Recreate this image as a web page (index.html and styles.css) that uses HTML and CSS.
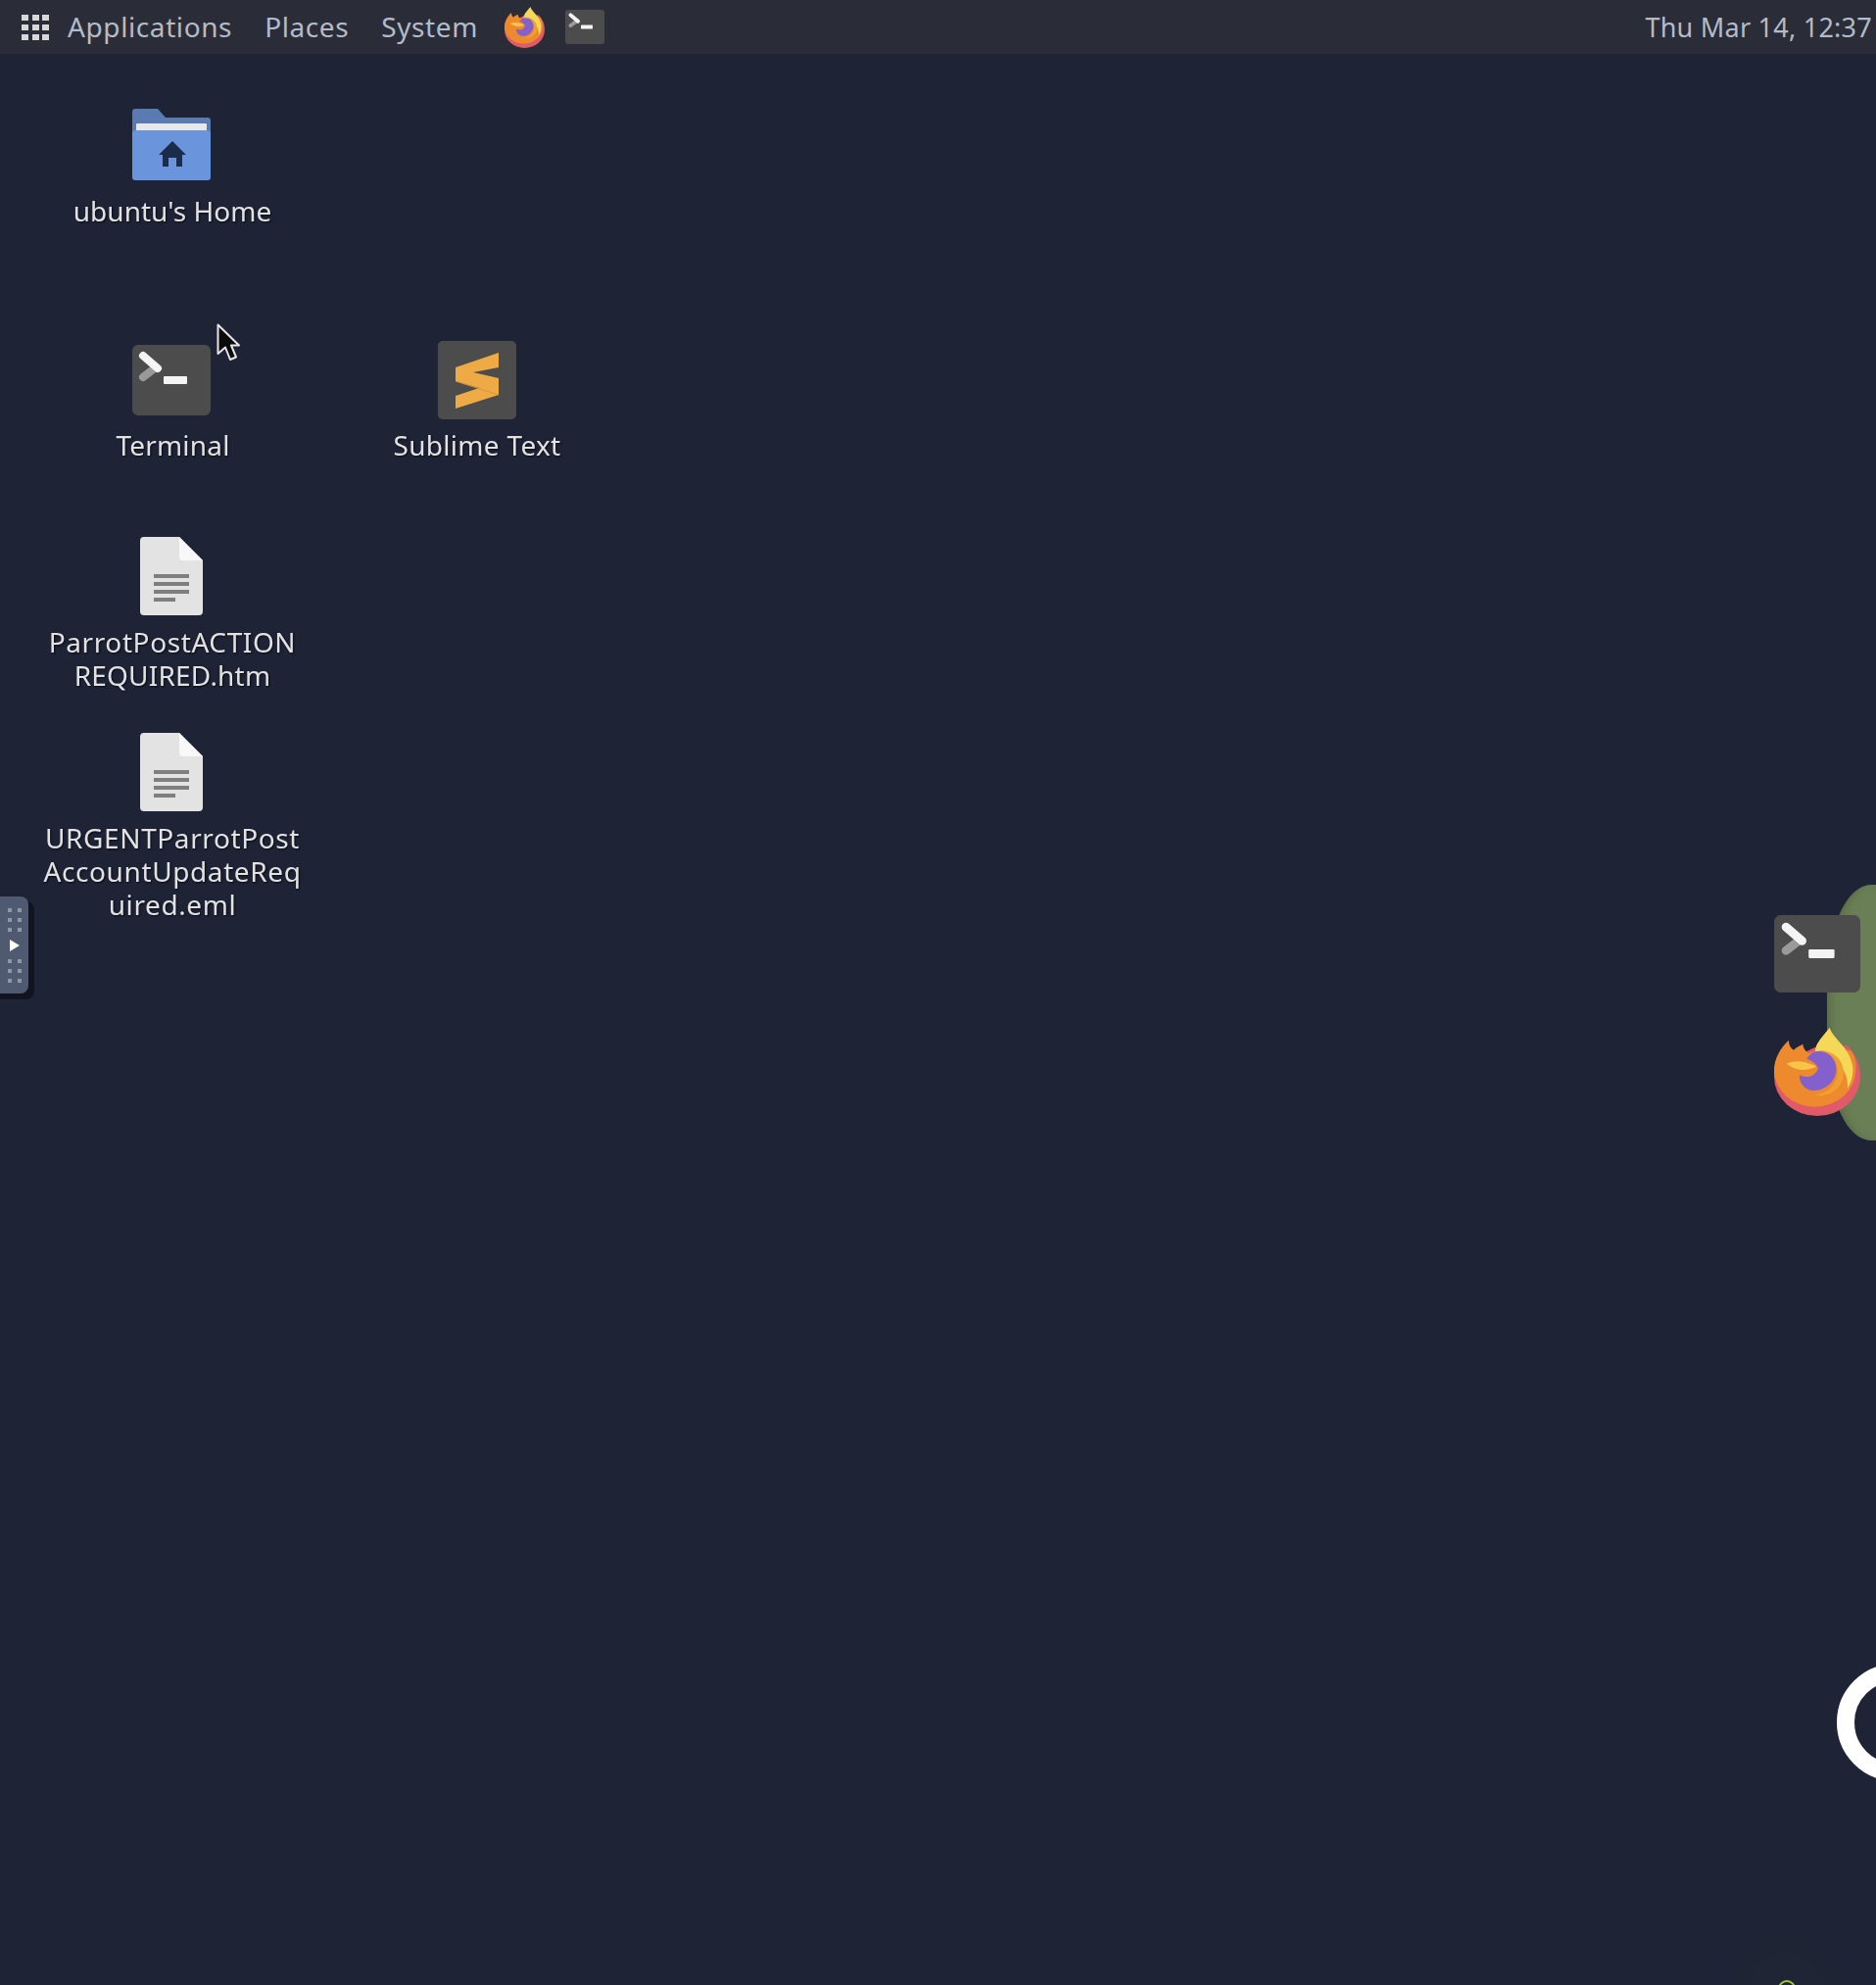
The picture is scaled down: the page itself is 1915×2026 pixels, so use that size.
FILE: index.html
```html
<!DOCTYPE html>
<html lang="en">
<head>
<meta charset="utf-8">
<title>Desktop</title>
<link rel="stylesheet" href="styles.css">
</head>
<body>
<svg class="defs" width="0" height="0" aria-hidden="true">
  <symbol id="firefox" viewBox="0 0 264 270">
    <path fill="#e05a68" d="M225 55C252 85 264 115 264 150A132 120 0 0 1 0 150L0 120 125 60Z"/>
    <path fill="#ee8a2e" d="M0 130C0 95 20 60 45 38C45 55 52 62 60 68C68 58 80 55 88 50C88 60 95 70 105 78L130 70 235 70C252 95 252 115 250 130A125 112 0 0 1 0 130Z"/>
    <path fill="#f6d858" d="M170 0C185 40 228 55 240 115C244 140 238 165 225 185C228 140 205 95 125 72C128 45 150 25 170 0Z"/>
    <path fill="#f0a030" d="M130 68C190 68 218 105 212 150C205 190 165 215 120 205C160 205 195 175 195 135C195 100 165 75 130 68Z"/>
    <path fill="#8460cc" d="M130 72C170 68 195 100 190 135C185 170 150 195 115 192C90 188 75 165 78 145C100 155 125 150 135 125C130 110 115 100 100 95C108 82 118 74 130 72Z"/>
    <path fill="#f8c44a" d="M38 110C60 98 92 100 130 118C110 132 70 135 38 110Z"/>
  </symbol>
  <symbol id="terminal" viewBox="0 0 80 72" preserveAspectRatio="none">
    <rect width="80" height="72" rx="6" fill="#4c4c4c"/>
    <path d="M11 33 24 23" stroke="#9a9a9a" stroke-width="8" stroke-linecap="round" fill="none"/>
    <path d="M11 11 26 24" stroke="#f4f4f4" stroke-width="8" stroke-linecap="round" fill="none"/>
    <rect x="32" y="32" width="24" height="8" rx="1" fill="#f4f4f4"/>
  </symbol>
  <symbol id="doc" viewBox="0 0 64 80">
    <path fill="#e3e3e3" d="M4 0H40L64 24V76A4 4 0 0 1 60 80H4A4 4 0 0 1 0 76V4A4 4 0 0 1 4 0Z"/>
    <path fill="#f8f8f8" d="M40 0L64 24H44A4 4 0 0 1 40 20Z"/>
    <path fill="#7f7f7f" d="M14 38H50V42H14ZM14 46H50V50H14ZM14 54H50V58H14ZM14 62H36V66H14Z"/>
  </symbol>
</svg>

<div class="screen">
  <header class="panel">
    <div class="menus">
      <div class="apps-grid" aria-hidden="true"><i></i><i></i><i></i><i></i><i></i><i></i><i></i><i></i><i></i></div>
      <nav class="menu-items">
        <span>Applications</span>
        <span>Places</span>
        <span>System</span>
      </nav>
      <div class="launchers">
        <svg class="launch-ff"><use href="#firefox"/></svg>
        <svg class="launch-term"><use href="#terminal"/></svg>
      </div>
    </div>
    <div class="clock">Thu Mar 14, 12:37</div>
  </header>

  <main class="desktop">
    <div class="item item-home">
      <svg class="ico-folder" viewBox="0 0 80 73">
        <path fill="#5a7ab2" d="M3 0H26L34 9H77A3 3 0 0 1 80 12V40H0V3A3 3 0 0 1 3 0Z"/>
        <rect x="4" y="15" width="72" height="10" rx="1" fill="#e8e8ea"/>
        <path fill="#6a94dc" d="M2 22H78L80 24V70A3 3 0 0 1 77 73H3A3 3 0 0 1 0 70V24Z"/>
        <path fill="#1b2c4a" d="M41 33 55 47H51V59H45V50H37V59H31V47H27Z"/>
      </svg>
      <div class="label label-home">ubuntu's Home</div>
    </div>

    <div class="item item-term">
      <svg class="ico-term"><use href="#terminal"/></svg>
      <div class="label label-term">Terminal</div>
    </div>

    <div class="item item-sublime">
      <svg class="ico-sublime" viewBox="0 0 80 80">
        <rect width="80" height="80" rx="5" fill="#4c4c4c"/>
        <polygon fill="#eeaa45" points="62,12 18,27 18,41 42,48 18,56 18,69 62,55 62,38 36,32 62,27"/>
        <path d="M18 41 62 55" stroke="#d2963c" stroke-width="1"/>
      </svg>
      <div class="label label-sublime">Sublime Text</div>
    </div>

    <div class="item item-doc1">
      <svg class="ico-doc"><use href="#doc"/></svg>
      <div class="label label-doc">ParrotPostACTION<br><span class="tight">REQUIRED.htm</span></div>
    </div>

    <div class="item item-doc2">
      <svg class="ico-doc"><use href="#doc"/></svg>
      <div class="label label-doc">URGENTParrotPost<br>AccountUpdateReq<br>uired.eml</div>
    </div>

    <svg class="cursor" viewBox="0 0 24 39">
      <path d="M1.5 1.5V31L9 24.5 14 37 20 34.5 15 22.5H23Z" fill="#0b0b0b" stroke="#e6e6e6" stroke-width="2" stroke-linejoin="round"/>
    </svg>

    <div class="handle-shadow"></div>
    <div class="handle">
      <div class="dots"><i></i><i></i><i></i><i></i><i></i><i></i></div>
      <div class="play"></div>
      <div class="dots"><i></i><i></i><i></i><i></i><i></i><i></i></div>
    </div>

    <div class="green-blob"></div>
    <svg class="dock-term"><use href="#terminal"/></svg>
    <svg class="dock-ff"><use href="#firefox"/></svg>
    <div class="white-ring"></div>
    <div class="faint-ring faint-outer"></div>
    <div class="faint-ring faint-inner"></div>
    <div class="green-ring"></div>
  </main>
</div>
</body>
</html>
```
FILE: styles.css
```css
* { box-sizing: border-box; }
html, body { margin: 0; padding: 0; background: #1e2336; }
body { width: 1915px; height: 2026px; overflow: hidden; font-family: "Noto Sans", "Open Sans", sans-serif; }
.defs { position: absolute; }
.screen { width: 1915px; height: 2026px; display: flex; flex-direction: column; filter: blur(0.7px); overflow: hidden; }

.panel {
  height: 55px;
  flex: none;
  background: #2a2d37;
  display: flex;
  justify-content: space-between;
  align-items: center;
  color: #b3bbc9;
  font-size: 28px;
  padding-left: 22px;
  padding-right: 4px;
}
.menus { display: flex; align-items: center; }
.apps-grid { width: 28px; height: 26px; display: grid; grid-template-columns: repeat(3, 7px); grid-template-rows: repeat(3, 6px); gap: 4px 3.5px; }
.apps-grid i { background: #d8d8d8; }
.menu-items { display: flex; gap: 33px; margin-left: 19px; margin-top: -2px; letter-spacing: 0.6px; }
.launchers { display: flex; align-items: center; margin-left: 27px; gap: 21px; }
.launch-ff { width: 41px; height: 42px; }
.launch-term { width: 40px; height: 35px; }
.clock { white-space: nowrap; font-size: 27px; letter-spacing: 0.25px; margin-top: -1px; }

.desktop { flex: 1; position: relative; }
.item { position: absolute; width: 300px; display: flex; flex-direction: column; align-items: center; }
.item svg { display: block; flex: none; }
.label { color: #e2e2e2; font-size: 28px; line-height: 34px; text-align: center; white-space: nowrap; text-shadow: 1px 1px 2px #0a0c14; }
.tight { letter-spacing: 0.2px; }

.item-home { left: 25px; top: 56px; }
.ico-folder { width: 80px; height: 73px; }
.label-home { margin-top: 14px; margin-left: 2px; }
.item-term { left: 25px; top: 297px; }
.ico-term { width: 80px; height: 72px; }
.label-term { margin-top: 13px; margin-left: 3px; letter-spacing: 0.2px; }
.item-sublime { left: 337px; top: 293px; }
.ico-sublime { width: 80px; height: 80px; }
.label-sublime { margin-top: 9px; letter-spacing: 0.3px; }
.item-doc1 { left: 25px; top: 493px; }
.item-doc2 { left: 25px; top: 693px; }
.ico-doc { width: 64px; height: 80px; }
.label-doc { margin-top: 10px; margin-left: 2px; letter-spacing: 0.6px; }

.cursor { position: absolute; left: 221px; top: 275px; width: 24px; height: 39px; }

.handle { position: absolute; left: 0; top: 860px; width: 29px; height: 99px; background: #4f5a70; border-radius: 0 8px 8px 0; display: flex; flex-direction: column; align-items: center; padding: 12px 0 10px 1px; gap: 8px; }
.handle-shadow { position: absolute; left: 0; top: 865px; width: 35px; height: 100px; background: #12141f; border-radius: 0 8px 8px 0; }
.dots { display: grid; grid-template-columns: repeat(2, 4px); gap: 6px; column-gap: 6px; }
.dots i { width: 4px; height: 4px; background: #8f97a6; }
.play { width: 0; height: 0; border-left: 10px solid #fff; border-top: 6px solid transparent; border-bottom: 6px solid transparent; }

.green-blob { position: absolute; left: 1865px; top: 848px; width: 100px; height: 261px; border-radius: 45px / 100px; background: #6b7f56; box-shadow: inset 8px 0 10px -6px #556644; }
.dock-term { position: absolute; left: 1811px; top: 879px; width: 88px; height: 79px; }
.dock-ff { position: absolute; left: 1811px; top: 994px; width: 88px; height: 90px; }
.white-ring { position: absolute; left: 1875px; top: 1643px; width: 120px; height: 120px; border-radius: 50%; border: 18px solid #fff; }
.faint-ring { position: absolute; border-radius: 50%; }
.faint-outer { left: 1764px; top: 1915px; width: 120px; height: 120px; background: #1f2434; }
.faint-inner { left: 1786px; top: 1937px; width: 76px; height: 76px; background: #202535; }
.green-ring { position: absolute; left: 1815px; top: 1966px; width: 18px; height: 18px; border-radius: 50%; border: 2px solid #9ccc30; }
```
